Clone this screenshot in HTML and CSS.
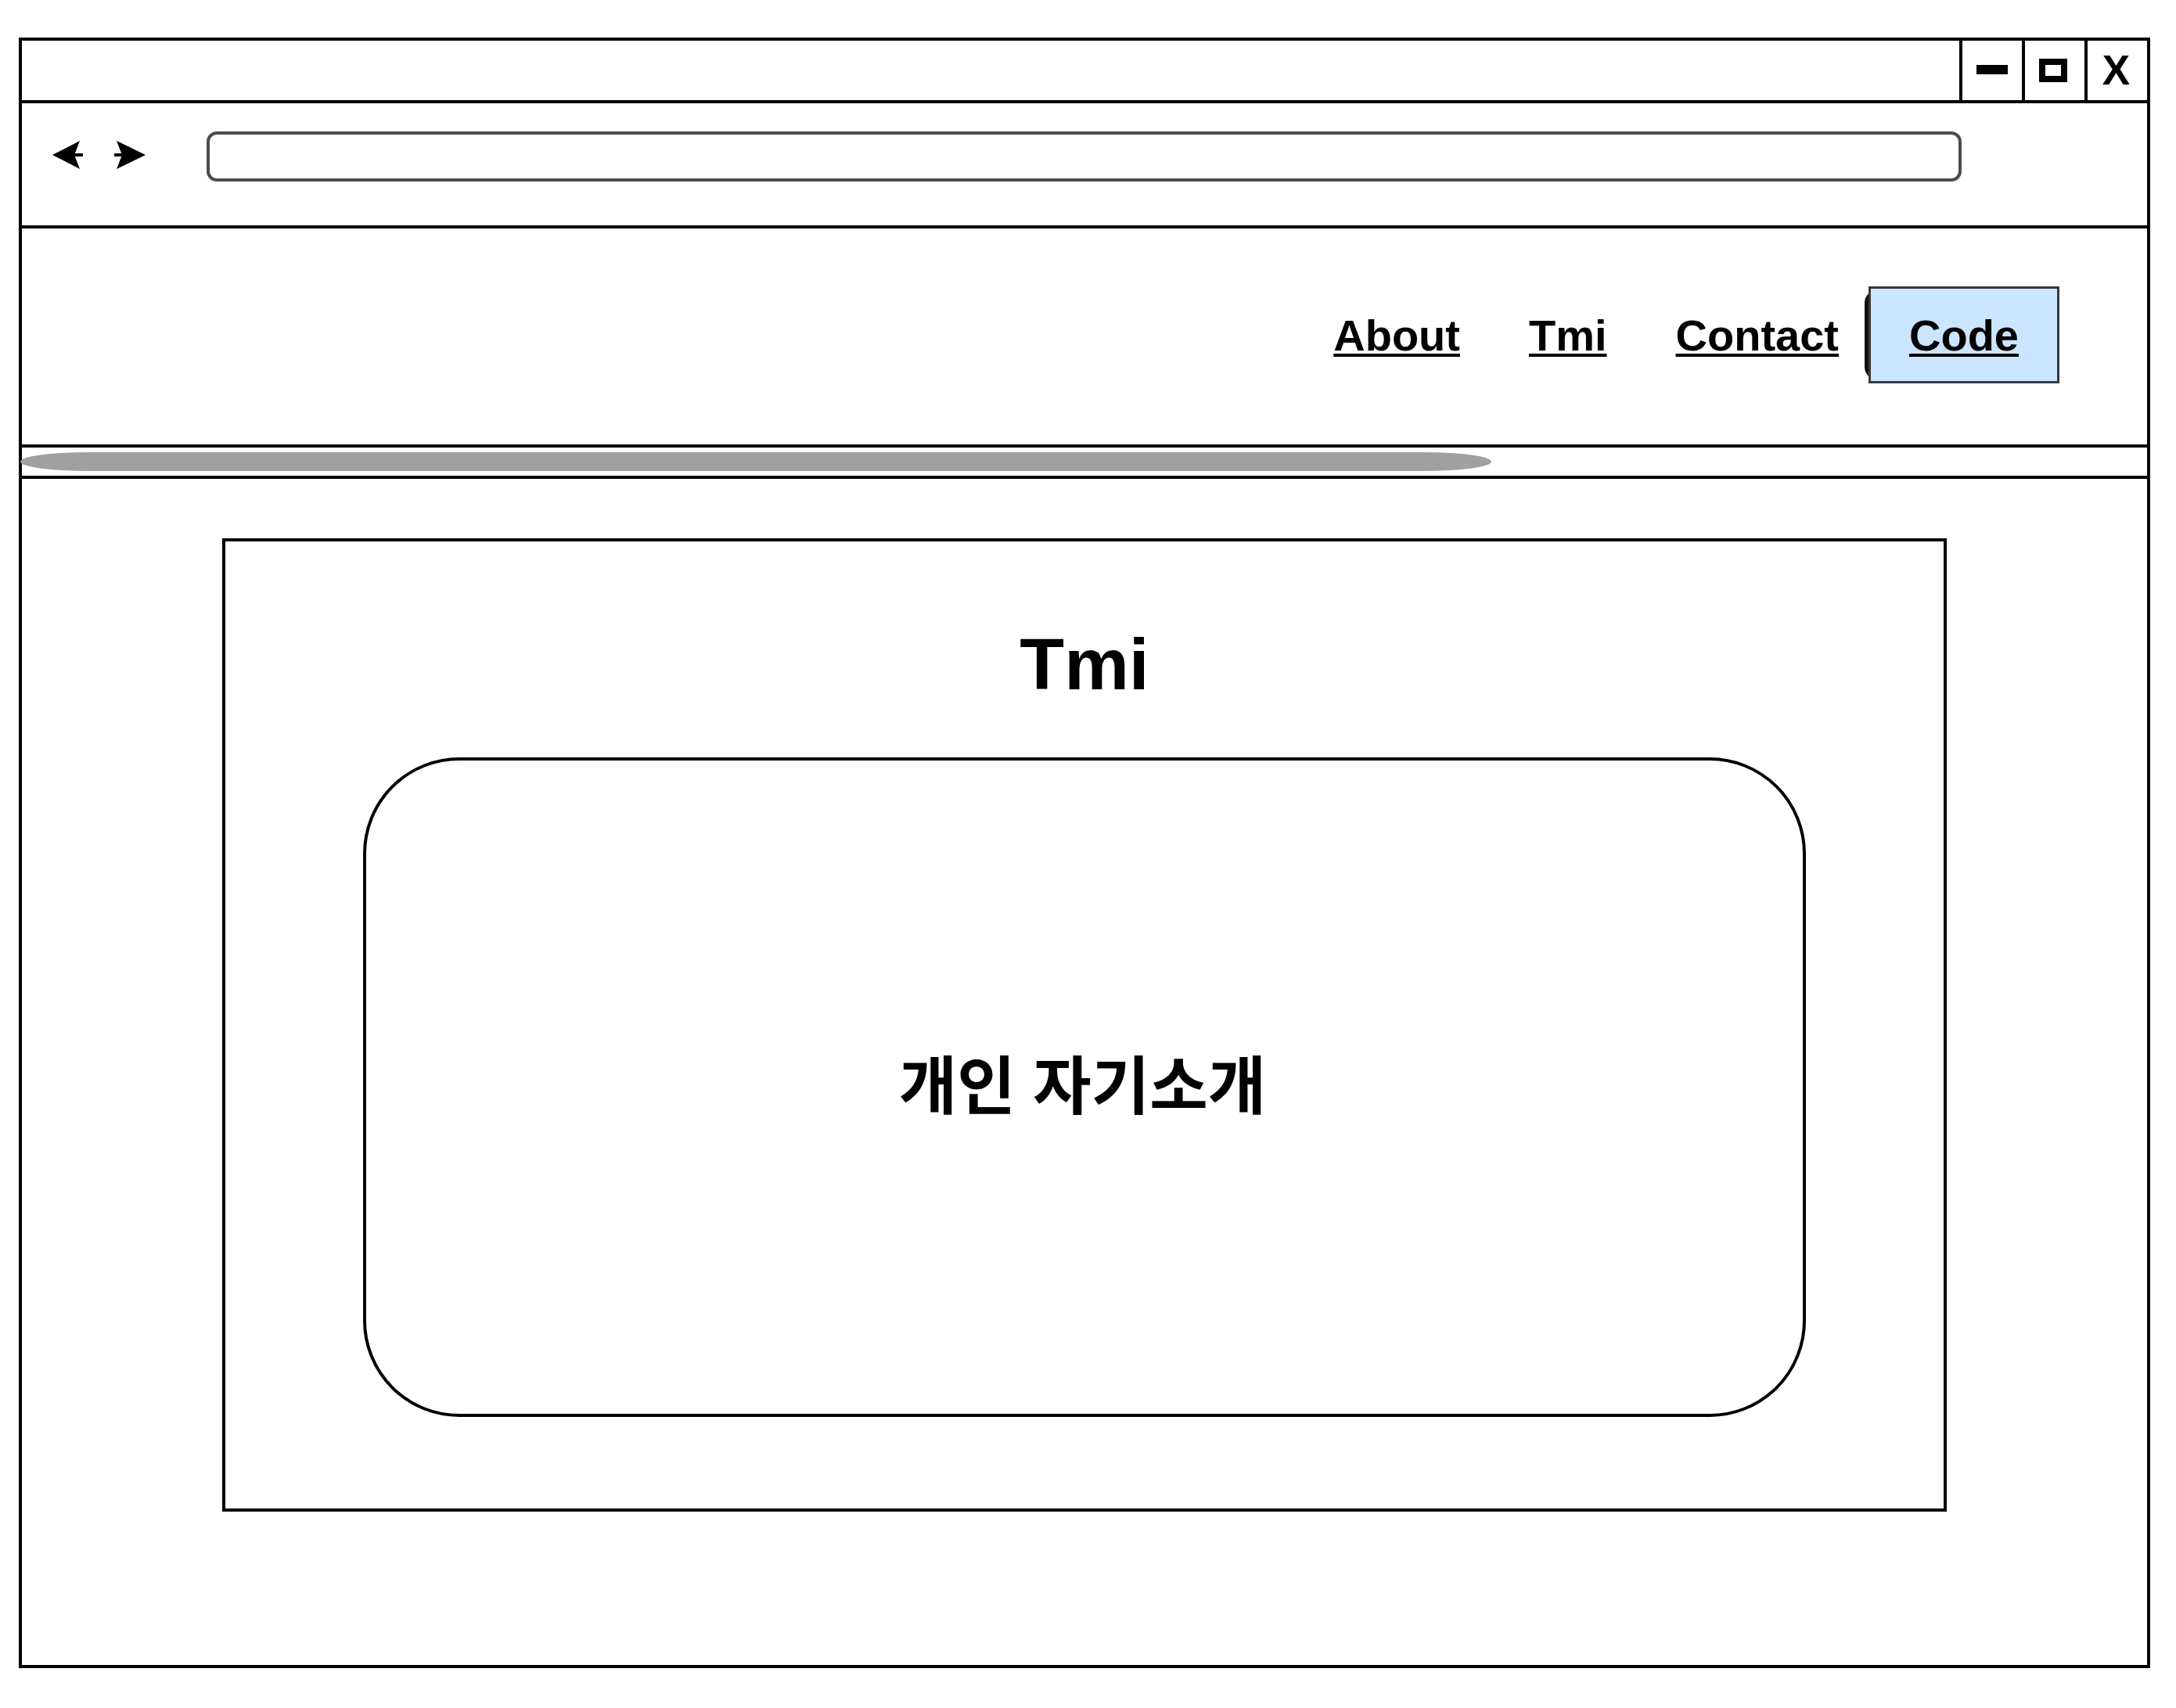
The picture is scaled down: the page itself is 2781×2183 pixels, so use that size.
FILE: index.html
```html
<!DOCTYPE html>
<html lang="ko">
<head>
<meta charset="utf-8">
<title>Tmi</title>
<link rel="stylesheet" href="styles.css">
</head>
<body>
<div class="window">
  <div class="titlebar">
    <div class="winbtn"><span class="ico-min"></span></div>
    <div class="winbtn"><span class="ico-max"></span></div>
    <div class="winbtn"><span class="ico-close">X</span></div>
  </div>
  <div class="addressrow">
    <svg class="arrow" width="40" height="36" viewBox="0 0 40 36">
      <rect x="27" y="16" width="12" height="4" fill="#000"/>
      <path d="M0 18 Q18 9 35 0 L28 18 L35 36 Q18 27 0 18 Z" fill="#000"/>
    </svg>
    <svg class="arrow arrow-fwd" width="40" height="36" viewBox="0 0 40 36">
      <rect x="0" y="16" width="13" height="4" fill="#000"/>
      <path d="M40 18 Q22 9 3 0 L10 18 L3 36 Q22 27 40 18 Z" fill="#000"/>
    </svg>
    <div class="urlbar"></div>
  </div>
  <nav class="navbar">
    <a class="navlink" href="#">About</a>
    <a class="navlink" href="#">Tmi</a>
    <a class="navlink" href="#">Contact</a>
    <div class="code-wrap">
      <span class="code-shadow"></span>
      <a class="navlink code-btn" href="#">Code</a>
    </div>
  </nav>
  <div class="scrollrow"><div class="scrollthumb"></div></div>
  <main class="content">
    <section class="panel">
      <h1 class="panel-title">Tmi</h1>
      <div class="card">
        <p class="card-text">개인 자기소개</p>
      </div>
    </section>
  </main>
</div>
</body>
</html>
```

FILE: styles.css
```css
* { box-sizing: border-box; }

html, body {
  margin: 0;
  padding: 0;
}

body {
  font-family: "Liberation Sans", "Noto Sans CJK KR", Arial, sans-serif;
  color: #000;
  width: 2781px;
  height: 2183px;
  overflow: hidden;
}

.window {
  margin: 48px 0 0 24px;
  width: 2724px;
  height: 2084px;
  border: 4px solid #000;
  display: flex;
  flex-direction: column;
}

.titlebar {
  height: 80px;
  border-bottom: 4px solid #000;
  display: flex;
  justify-content: flex-end;
  flex: none;
}

.winbtn {
  width: 80px;
  height: 100%;
  border-left: 4px solid #000;
  display: flex;
  align-items: center;
  justify-content: center;
}

.ico-min {
  display: block;
  width: 40px;
  height: 12px;
  background: #000;
  margin-top: -3px;
}

.ico-max {
  display: block;
  width: 36px;
  height: 30px;
  border: 8px solid #000;
  margin-left: -4px;
  margin-top: -1px;
}

.ico-close {
  font-family: "Liberation Sans", Arial, sans-serif;
  font-weight: bold;
  font-size: 53px;
  line-height: 1;
  margin-left: -3px;
  margin-top: -1px;
}

.addressrow {
  height: 160px;
  border-bottom: 4px solid #000;
  display: flex;
  align-items: flex-start;
  padding: 36px 237px 0 39px;
  flex: none;
}

.arrow {
  display: block;
  margin-top: 12px;
  flex: none;
}

.arrow-fwd {
  margin-left: 39px;
  margin-right: 78px;
}

.urlbar {
  flex: 1;
  height: 64px;
  border: 4px solid #4d4d4d;
  border-radius: 13px;
}

.navbar {
  height: 280px;
  border-bottom: 4px solid #000;
  display: flex;
  align-items: center;
  justify-content: flex-end;
  padding: 0 112px 4px 0;
  flex: none;
}

.navlink {
  color: #000;
  font-weight: bold;
  font-size: 56px;
  text-decoration: underline;
  text-decoration-thickness: 4px;
  text-underline-offset: 4px;
  margin-left: 88px;
}

.code-wrap {
  position: relative;
  margin-left: 38px;
  width: 244px;
  height: 124px;
}

.code-shadow {
  position: absolute;
  left: -5px;
  top: 5px;
  bottom: 5px;
  width: 40px;
  border: 5px solid #111;
  border-right: none;
  border-radius: 16px 0 0 16px;
}

.code-btn {
  position: relative;
  margin-left: 0;
  display: flex;
  align-items: center;
  justify-content: center;
  width: 100%;
  height: 100%;
  background: #cce5ff;
  border: 3px solid #36393d;
}

.scrollrow {
  height: 40px;
  border-bottom: 4px solid #000;
  padding-top: 6px;
  flex: none;
}

.scrollthumb {
  margin-left: -2px;
  width: 1880px;
  height: 24px;
  background: #a0a0a0;
  border-radius: 85px / 12px;
}

.content {
  flex: 1;
  padding: 76px 256px 0;
}

.panel {
  height: 1244px;
  border: 4px solid #000;
  padding: 104px 176px 0;
  display: flex;
  flex-direction: column;
}

.panel-title {
  margin: 0;
  font-size: 93px;
  font-weight: bold;
  text-align: center;
  line-height: normal;
}

.card {
  margin-top: 65px;
  height: 843px;
  border: 4px solid #000;
  border-radius: 123px;
  display: flex;
  align-items: center;
  justify-content: center;
}

.card-text {
  margin: 0;
  font-family: "Liberation Sans", "Noto Sans CJK KR", sans-serif;
  font-weight: bold;
  font-size: 81px;
  line-height: 1;
  margin-left: -5px;
}
```
